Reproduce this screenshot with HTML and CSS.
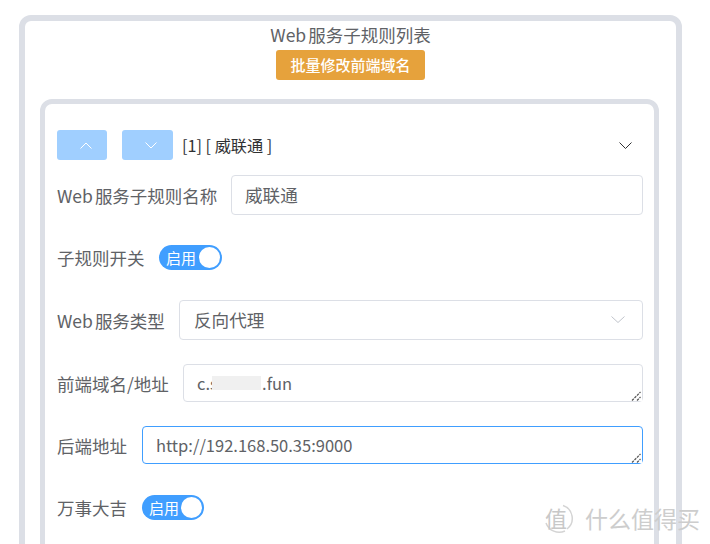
FILE: index.html
```html
<!DOCTYPE html>
<html lang="zh">
<head>
<meta charset="utf-8">
<title>Web服务子规则列表</title>
<link rel="stylesheet" href="styles.css">
</head>
<body>
<div class="page">
  <section class="outer">
    <h2 class="title"><span class="latin">Web</span>服务子规则列表</h2>
    <div class="batch-wrap"><button class="batch">批量修改前端域名</button></div>
    <section class="inner">
      <div class="head">
        <button class="move move-up"><svg width="12" height="7" viewBox="0 0 12 7"><path d="M.5 6.500 6 1 11.500 6.500" fill="none" stroke="#fff" stroke-width="1"/></svg></button>
        <button class="move move-down"><svg width="12" height="7" viewBox="0 0 12 7"><path d="M.5 .5 6 6 11.500 .5" fill="none" stroke="#fff" stroke-width="1"/></svg></button>
        <span class="head-text">[1] [ 威联通 ]</span>
        <svg class="collapse" width="13" height="7" viewBox="0 0 13 7"><path d="M.5 .5 6.500 6.500 12.500 .5" fill="none" stroke="#303133" stroke-width="1"/></svg>
      </div>
      <div class="row row-name">
        <label class="label label-name"><span class="latin">Web</span>服务子规则名称</label>
        <input class="field input-name" value="威联通">
      </div>
      <div class="row row-sw1">
        <label class="label label-sw1">子规则开关</label>
        <span class="switch"><span class="switch-text">启用</span><span class="knob"></span></span>
      </div>
      <div class="row row-type">
        <label class="label label-type"><span class="latin">Web</span>服务类型</label>
        <div class="field select">
          <span>反向代理</span>
          <svg width="14" height="7" viewBox="0 0 14 7"><path d="M.5 .5 7 6.500 13.500 .5" fill="none" stroke="#c0c4cc" stroke-width="1"/></svg>
        </div>
      </div>
      <div class="row row-front">
        <label class="label label-front">前端域名/地址</label>
        <div class="area-wrap">
          <textarea class="field area">c.s            .fun</textarea>
          <span class="mask"></span>
          <svg class="grip" width="11" height="10" viewBox="0 0 11 10"><path d="M1 9.500 9.500 1M6 9.500 9.500 6" fill="none" stroke="#555" stroke-width="1.200" stroke-dasharray="2.500 1"/></svg>
        </div>
      </div>
      <div class="row row-back">
        <label class="label label-back">后端地址</label>
        <div class="area-wrap">
          <textarea class="field area focus">http://192.168.50.35:9000</textarea>
          <svg class="grip" width="11" height="10" viewBox="0 0 11 10"><path d="M1 9.500 9.500 1M6 9.500 9.500 6" fill="none" stroke="#555" stroke-width="1.200" stroke-dasharray="2.500 1"/></svg>
        </div>
      </div>
      <div class="row row-sw2">
        <label class="label label-sw2">万事大吉</label>
        <span class="switch switch-narrow"><span class="switch-text">启用</span><span class="knob"></span></span>
      </div>
    </section>
  </section>
  <div class="watermark">
    <span class="wm-badge">
      <svg class="wm-ring" width="31" height="31" viewBox="0 0 31 31"><path d="M20 2.500A13.500 13.500 0 0 1 24 26M22 28A14 14 0 0 1 3 20" fill="none" stroke="#d4d4d4" stroke-width="1.500"/></svg>
      <span class="wm-glyph">值</span>
    </span>
    <span class="wm-text">什么值得买</span>
  </div>
</div>
</body>
</html>
```
FILE: styles.css
```css
* { box-sizing: border-box; }
html, body { margin: 0; height: 544px; overflow: hidden; background: #fff; }
body { font-family: "Noto Sans CJK SC", "Open Sans", sans-serif; color: #606266; }
.page { position: relative; height: 544px; overflow: hidden; padding: 15px 28px 0 19px; }
.outer { border: 6px solid #dcdfe6; border-radius: 12px; padding: 0 17px 0 15px; height: 700px; }
.latin { margin-right: 2px; }
.title { margin: 0; height: 29px; padding-left: 2px; font-size: 17.500px; font-weight: 400; line-height: 28px; text-align: center; color: #606266; }
.batch-wrap { display: flex; justify-content: center; padding-left: 2px; }
.batch { width: 149px; height: 30px; padding: 0; border: 0; border-radius: 3px; background: #e6a23c; color: #fff; font: 500 15px/30px "Noto Sans CJK SC", sans-serif; }
.inner { margin-top: 19px; border: 5px solid #dcdfe6; border-radius: 12px; padding: 26px 11px 0 12px; height: 600px; }
.head { display: flex; align-items: center; height: 30px; }
.move { display: flex; align-items: center; justify-content: center; height: 30px; padding: 0 0 0 7px; border: 0; border-radius: 3px; background: #a0cfff; }
.move-up { width: 50px; margin-right: 15px; }
.move-down { width: 51px; margin-right: 9px; }
.head-text { font-size: 16.200px; color: #303133; line-height: 30px; }
.collapse { margin-left: auto; margin-right: 11px; }
.row { display: flex; align-items: center; }
.label { flex: none; font-size: 17.500px; color: #606266; }
.row-name { margin-top: 15px; height: 40px; }
.label-name { width: 174px; }
.row-sw1 { margin-top: 30px; height: 25px; }
.label-sw1 { width: 102px; }
.row-type { margin-top: 30px; height: 40px; }
.label-type { width: 122px; }
.row-front { margin-top: 24px; height: 38px; }
.label-front { width: 126px; }
.row-back { margin-top: 24px; height: 38px; }
.label-back { width: 85px; }
.row-sw2 { margin-top: 31px; height: 25px; }
.label-sw2 { width: 85px; }
.field { border: 1px solid #dcdfe6; border-radius: 4px; background: #fff; color: #606266; font: 17.600px "Noto Sans CJK SC", "Open Sans", sans-serif; outline: none; }
.input-name { flex: 1; min-width: 0; height: 40px; padding: 0 13px 2px; }
.select { flex: 1; height: 40px; padding: 0 17px 2px 14px; display: flex; align-items: center; justify-content: space-between; }
.area-wrap { flex: 1; position: relative; height: 38px; }
.area { display: block; width: 100%; height: 38px; padding: 6px 13px; font-size: 16.500px; line-height: 24px; resize: vertical; overflow: hidden; }
.focus { border-color: #409eff; }
.mask { position: absolute; left: 29px; top: 12px; width: 49px; height: 14px; background: #f0f0f0; }
.grip { position: absolute; right: 1px; bottom: 1px; background: #fff; pointer-events: none; }
.switch { display: flex; align-items: center; justify-content: space-between; width: 63px; height: 25px; padding: 0 2px 0 7px; border-radius: 13px; background: #409eff; }
.switch-narrow { width: 62px; }
.switch-text { font-size: 15px; line-height: 25px; color: #fff; }
.knob { width: 21px; height: 21px; border-radius: 50%; background: #fff; }
.watermark { position: absolute; left: 543px; top: 503px; display: flex; align-items: center; gap: 11px; }
.wm-badge { position: relative; display: block; width: 31px; height: 31px; }
.wm-ring { display: block; }
.wm-glyph { position: absolute; left: 2px; top: 0; font-size: 22px; line-height: 28px; color: #c8c8c8; }
.wm-text { font-size: 23px; line-height: 29px; color: #cdcdcd; }
```
